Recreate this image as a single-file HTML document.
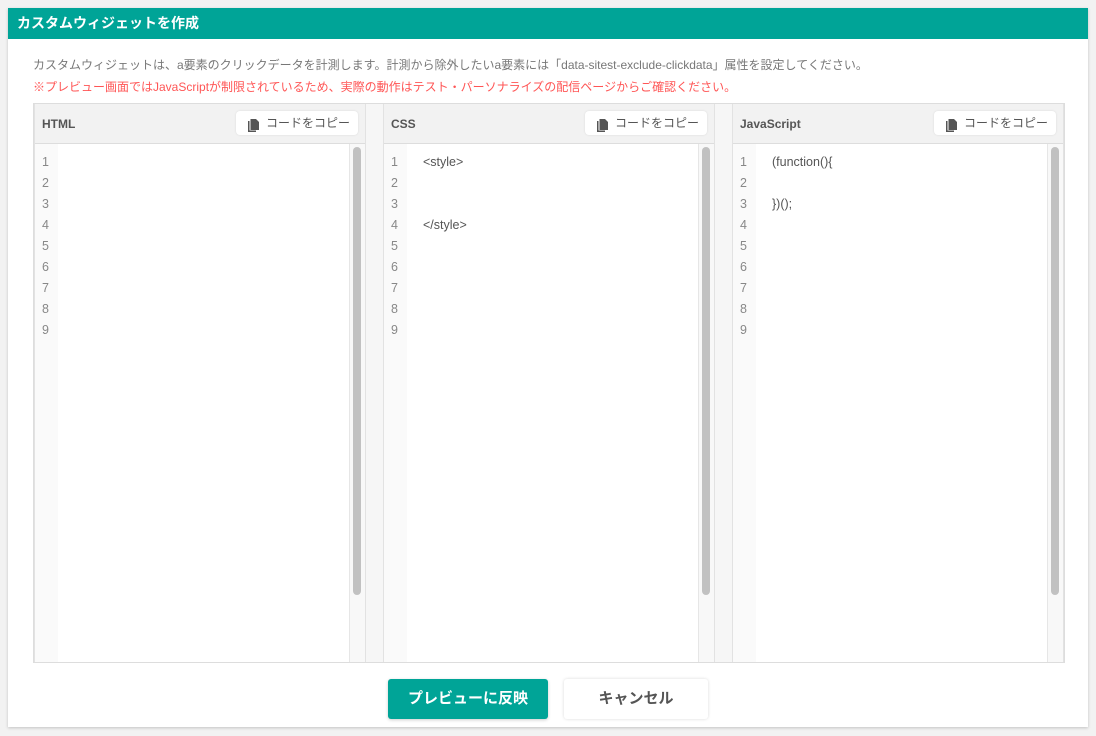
<!DOCTYPE html>
<html><head><meta charset="utf-8"><style>
*{margin:0;padding:0;box-sizing:border-box}
body{width:1096px;height:736px;background:#f2f2f2;font-family:"Liberation Sans","Noto Sans CJK JP",sans-serif;position:relative;overflow:hidden}
.card{position:absolute;left:8px;top:8px;width:1080px;height:719px;background:#fff;box-shadow:0 1px 3px rgba(0,0,0,.2)}
.hd{position:absolute;left:0;top:0;width:1080px;height:31px;background:#00a497;color:#fff;font-weight:bold;font-size:14px;line-height:31px;padding-left:9px}
.t1{position:absolute;left:33px;top:56px;font-size:12px;color:#777;white-space:nowrap}
.t2{position:absolute;left:33px;top:78px;font-size:12px;color:#f55;white-space:nowrap}
.box{position:absolute;left:33px;top:103px;width:1032px;height:560px;border:1px solid #ddd;background:#f6f6f6}
.p{position:absolute;top:0;width:332px;height:558px;background:#fff;border-left:1px solid #e2e2e2;border-right:1px solid #e2e2e2}
.ph{height:40px;background:#f2f2f2;border-bottom:1px solid #ddd;position:relative}
.ph b{position:absolute;left:7px;top:13px;font-size:12px;color:#555}
.btn{position:absolute;right:7px;top:7px;width:122px;height:24px;background:#fff;border-radius:4px;box-shadow:0 0 2px rgba(0,0,0,.1);font-size:12px;color:#555;line-height:25px;padding-left:30px}
.btn i{position:absolute;left:12px;top:5px;width:11px;height:13px}
.gut{position:absolute;left:0;top:40px;width:23px;height:518px;background:#fafafa}
.num{position:absolute;left:7px;top:48px;font-size:12.5px;color:#888;line-height:21px}
.code{position:absolute;left:39px;top:48px;font-size:12.5px;color:#555;line-height:21px;white-space:pre}
.tr{position:absolute;right:0;top:40px;width:16px;height:518px;background:#f8f8f8;border-left:1px solid #e6e6e6}
.th{position:absolute;left:3px;top:3px;width:8px;height:448px;background:#c1c1c1;border-radius:4px}
.b1{position:absolute;left:388px;top:679px;width:160px;height:40px;background:#00a497;border-radius:3px;color:#fff;font-weight:bold;font-size:15px;text-align:center;line-height:40px;box-shadow:0 1px 3px rgba(0,0,0,.2)}
.b2{position:absolute;left:564px;top:679px;width:144px;height:40px;background:#fff;border-radius:3px;color:#555;font-weight:bold;font-size:15px;text-align:center;line-height:40px;box-shadow:0 0 3px rgba(0,0,0,.15)}
</style></head><body>
<div class="card"><div class="hd">カスタムウィジェットを作成</div></div>
<div class="t1">カスタムウィジェットは、a要素のクリックデータを計測します。計測から除外したいa要素には「data-sitest-exclude-clickdata」属性を設定してください。</div>
<div class="t2">※プレビュー画面ではJavaScriptが制限されているため、実際の動作はテスト・パーソナライズの配信ページからご確認ください。</div>
<div class="box">
<div class="p" style="left:0">
<div class="ph"><b>HTML</b><div class="btn"><i><svg width="11" height="13" viewBox="0 0 11 13"><path d="M0 2h1.5v9.5H8V13H0z" fill="#555"/><path d="M2.5 0h5.5l3 3v8H2.5z" fill="#555"/></svg></i>コードをコピー</div></div>
<div class="gut"></div><div class="num">1<br>2<br>3<br>4<br>5<br>6<br>7<br>8<br>9</div>
<div class="tr"><div class="th"></div></div></div>
<div class="p" style="left:349px">
<div class="ph"><b>CSS</b><div class="btn"><i><svg width="11" height="13" viewBox="0 0 11 13"><path d="M0 2h1.5v9.5H8V13H0z" fill="#555"/><path d="M2.5 0h5.5l3 3v8H2.5z" fill="#555"/></svg></i>コードをコピー</div></div>
<div class="gut"></div><div class="num">1<br>2<br>3<br>4<br>5<br>6<br>7<br>8<br>9</div>
<div class="code">&lt;style&gt;


&lt;/style&gt;</div>
<div class="tr"><div class="th"></div></div></div>
<div class="p" style="left:698px">
<div class="ph"><b>JavaScript</b><div class="btn"><i><svg width="11" height="13" viewBox="0 0 11 13"><path d="M0 2h1.5v9.5H8V13H0z" fill="#555"/><path d="M2.5 0h5.5l3 3v8H2.5z" fill="#555"/></svg></i>コードをコピー</div></div>
<div class="gut"></div><div class="num">1<br>2<br>3<br>4<br>5<br>6<br>7<br>8<br>9</div>
<div class="code">(function(){

})();</div>
<div class="tr"><div class="th"></div></div></div>
</div>
<div class="b1">プレビューに反映</div>
<div class="b2">キャンセル</div>
</body></html>
